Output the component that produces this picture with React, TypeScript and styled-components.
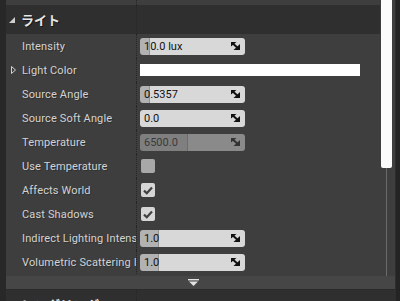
import styled, { createGlobalStyle } from 'styled-components'

const GlobalStyle = createGlobalStyle`
  html, body {
    margin: 0;
    padding: 0;
    background: #262626;
  }
  body {
    font-family: Roboto, "Noto Sans", "Noto Sans CJK JP", sans-serif;
  }
`

const Screen = styled.div`
  width: 400px;
  height: 301px;
  display: flex;
  overflow: hidden;
  background: #262626;
`
const Gutter = styled.div`
  width: 6px;
  flex: none;
  background: #282828;
`
const RightEdge = styled.div`
  width: 5px;
  flex: none;
  box-sizing: border-box;
  background: #242424;
  border-left: 1px solid #2e2e2e;
`
const Main = styled.div`
  flex: 1;
  min-width: 0;
  display: flex;
  flex-direction: column;
`
const Body = styled.div`
  height: 276px;
  flex: none;
  display: flex;
`
const Panel = styled.div`
  width: 374px;
  flex: none;
  display: flex;
  flex-direction: column;
  background: #3e3e3e;
`
const TopGap = styled.div`
  height: 5px;
  flex: none;
  display: flex;
`
const KeyCell = styled.div`
  width: 131px;
  flex: none;
  box-sizing: border-box;
  border-right: 1px dotted #252525;
  display: flex;
  align-items: center;
  overflow: hidden;
`
const Header = styled.div`
  height: 29px;
  flex: none;
  display: flex;
  background: #2f2f2f;
`
const HeaderTitle = styled(KeyCell)`
  padding-left: 3px;
  gap: 6px;
  font-family: "Noto Sans CJK JP", "Noto Sans", sans-serif;
  font-size: 13px;
  font-weight: 700;
  color: #e6e6e6;
  text-shadow: 1px 1px 0 rgba(0, 0, 0, 0.55);
  white-space: nowrap;
  overflow: visible;
`
const Row = styled.div`
  height: 24px;
  flex: none;
  display: flex;
`
const Label = styled(KeyCell)`
  padding-left: 5px;
  font-size: 11px;
  letter-spacing: 0.15px;
  color: #d2d2d2;
  white-space: nowrap;
  text-shadow: 1px 1px 0 rgba(0, 0, 0, 0.25);
`
const Expander = styled.span`
  width: 11px;
  flex: none;
  display: flex;
  align-items: center;
`
const ValueCell = styled.div`
  flex: 1;
  display: flex;
  align-items: center;
  padding-left: 3px;
`
const SpinBox = styled.div<{ $fill: number; $disabled?: boolean }>`
  width: 105px;
  height: 17px;
  box-sizing: border-box;
  border-radius: 3px;
  display: flex;
  align-items: center;
  padding: 0 5px 0 4px;
  background: ${(p) =>
    p.$fill > 0
      ? `linear-gradient(to right, ${p.$disabled ? '#7f7f7f' : '#b2b2b2'} 0 ${p.$fill - 1}px, ${p.$disabled ? '#6c6c6c' : '#929292'} ${p.$fill - 1}px ${p.$fill}px, ${p.$disabled ? '#8a8a8a' : '#d8d8d8'} ${p.$fill}px)`
      : p.$disabled ? '#8a8a8a' : '#d8d8d8'};
  color: ${(p) => (p.$disabled ? '#3a3a3a' : '#111111')};
  font-size: 11px;
`
const SpinText = styled.span`
  flex: 1;
  white-space: nowrap;
`
const ColorBar = styled.div`
  width: 220px;
  height: 12px;
  background: #ffffff;
`
const CheckBox = styled.div<{ $checked: boolean }>`
  width: 14px;
  height: 14px;
  margin-left: 1px;
  border-radius: 2px;
  background: ${(p) => (p.$checked ? '#d6d6d6' : '#a8a8a8')};
  display: flex;
  align-items: center;
  justify-content: center;
`
const Scrollbar = styled.div`
  width: 15px;
  flex: none;
  display: flex;
  flex-direction: column;
  background: #3e3e3e;
`
const Thumb = styled.div`
  width: 11px;
  height: 168px;
  margin-left: 1px;
  flex: none;
  background: #fbfbfb;
  border-radius: 0 0 2px 2px;
`
const Track = styled.div`
  flex: 1;
  width: 1px;
  margin-left: 6px;
  background: #6a6a6a;
`
const AdvancedStrip = styled.div`
  height: 13px;
  flex: none;
  display: flex;
  align-items: center;
  justify-content: center;
  padding-right: 15px;
  background: #464646;
  border-bottom: 1px solid #2a2a2a;
`

type Prop =
  | { label: string; kind: 'spin'; value: string; fill: number; disabled?: boolean }
  | { label: string; kind: 'color' }
  | { label: string; kind: 'check'; checked: boolean }

const props: Prop[] = [
  { label: 'Intensity', kind: 'spin', value: '10.0 lux', fill: 10 },
  { label: 'Light Color', kind: 'color' },
  { label: 'Source Angle', kind: 'spin', value: '0.5357', fill: 10 },
  { label: 'Source Soft Angle', kind: 'spin', value: '0.0', fill: 0 },
  { label: 'Temperature', kind: 'spin', value: '6500.0', fill: 48, disabled: true },
  { label: 'Use Temperature', kind: 'check', checked: false },
  { label: 'Affects World', kind: 'check', checked: true },
  { label: 'Cast Shadows', kind: 'check', checked: true },
  { label: 'Indirect Lighting Intensity', kind: 'spin', value: '1.0', fill: 19 },
  { label: 'Volumetric Scattering Intensity', kind: 'spin', value: '1.0', fill: 19 },
]

const ExpandedArrow = () => (
  <svg width="6" height="6" viewBox="0 0 6 6">
    <polygon points="6,0 6,6 0,6" fill="#cfcfcf" />
  </svg>
)

const CollapsedArrow = () => (
  <svg width="5" height="8" viewBox="0 0 5 8">
    <polygon points="0.5,0.5 4.5,4 0.5,7.5" fill="none" stroke="#d0d0d0" strokeWidth="1" />
  </svg>
)

const DragIcon = ({ color }: { color: string }) => (
  <svg width="9" height="8" viewBox="0 0 9 8">
    <polygon points="0,0 5.5,0 0,4.5" fill={color} />
    <polygon points="9,8 9,2 2.5,8" fill={color} />
    <line x1="1" y1="0.8" x2="6.5" y2="5.8" stroke={color} strokeWidth="2" />
  </svg>
)

const Check = () => (
  <svg width="10" height="9" viewBox="0 0 10 9">
    <path d="M1 4.6 L3.8 7.2 L9 1.6" fill="none" stroke="#404040" strokeWidth="2.2" />
  </svg>
)

const DownArrow = () => (
  <svg width="11" height="7" viewBox="0 0 11 7">
    <rect x="0" y="0" width="11" height="1.4" fill="#e2e2e2" />
    <polygon points="1,2.6 10,2.6 5.5,7" fill="#e2e2e2" />
  </svg>
)

const Value = ({ p }: { p: Prop }) => {
  if (p.kind === 'color') return <ColorBar />
  if (p.kind === 'check')
    return <CheckBox $checked={p.checked}>{p.checked && <Check />}</CheckBox>
  return (
    <SpinBox $fill={p.fill} $disabled={p.disabled}>
      <SpinText>{p.value}</SpinText>
      <DragIcon color={p.disabled ? '#333333' : '#111111'} />
    </SpinBox>
  )
}

const App = () => {
  return (
    <Screen>
      <GlobalStyle />
      <Gutter />
      <Main>
        <Body>
          <Panel>
            <TopGap>
              <KeyCell />
            </TopGap>
            <Header>
              <HeaderTitle>
                <ExpandedArrow />
                ライト
              </HeaderTitle>
            </Header>
            {props.map((p) => (
              <Row key={p.label}>
                <Label>
                  <Expander>{p.kind === 'color' && <CollapsedArrow />}</Expander>
                  {p.label}
                </Label>
                <ValueCell>
                  <Value p={p} />
                </ValueCell>
              </Row>
            ))}
          </Panel>
          <Scrollbar>
            <Thumb />
            <Track />
          </Scrollbar>
        </Body>
        <AdvancedStrip>
          <DownArrow />
        </AdvancedStrip>
        <Header>
          <HeaderTitle>
            <ExpandedArrow />
            レンダリング
          </HeaderTitle>
        </Header>
      </Main>
      <RightEdge />
    </Screen>
  )
}

export default App
